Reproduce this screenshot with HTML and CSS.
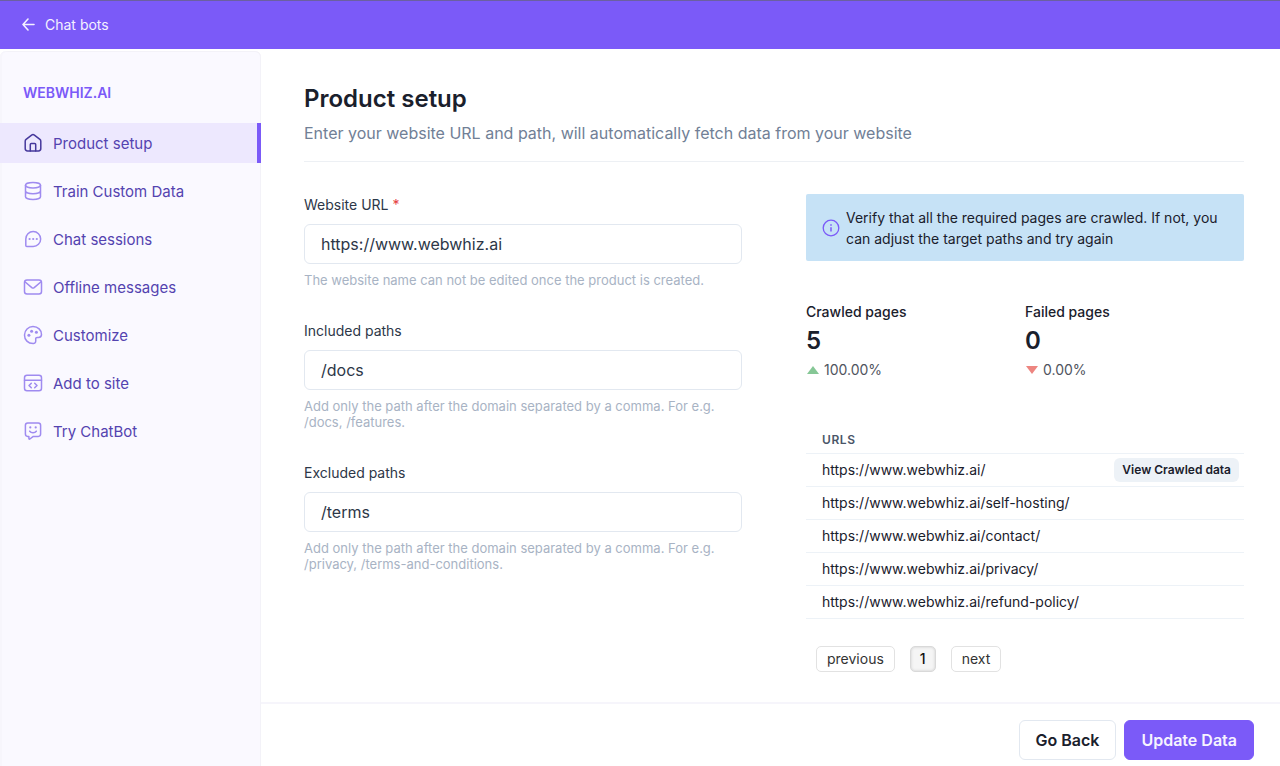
FILE: index.html
```html
<!DOCTYPE html>
<html lang="en">
<head>
    <meta charset="UTF-8">
    <meta name="viewport" content="width=device-width, initial-scale=1.0">
    <title>Product setup - WebWhiz</title>
    <link rel="stylesheet" href="styles.css">
</head>
<body>
    <header class="topbar">
        <a href="#" class="back-link">
            <svg width="14" height="14" viewBox="0 0 14 14" fill="none" stroke="currentColor" stroke-width="1.6" stroke-linecap="round" stroke-linejoin="round">
                <path d="M13 7.500H2M7 2L2 7.500l5 5.500"/>
            </svg>
            Chat bots
        </a>
    </header>

    <div class="layout">
        <aside class="sidebar">
            <h2 class="sidebar-title">WEBWHIZ.AI</h2>
            <nav class="nav">
                <a href="#" class="nav-item active">
                    <svg class="icon" viewBox="0 0 20 20">
                        <path d="M2.200 8.300c0-.8.3-1.400.9-1.900l5.500-4.300c.9-.7 1.900-.7 2.800 0l5.500 4.300c.6.500.9 1.100.9 1.900v7.200c0 1.400-1 2.400-2.400 2.400H4.600c-1.400 0-2.400-1-2.400-2.400z"/>
                        <path d="M7.300 17.900v-6.400c0-.6.4-1 1-1h3.400c.6 0 1 .4 1 1v6.400"/>
                    </svg>
                    Product setup
                </a>
                <a href="#" class="nav-item">
                    <svg class="icon" viewBox="0 0 20 20">
                        <ellipse cx="10" cy="4.200" rx="7.500" ry="2.700"/>
                        <path d="M2.500 4.200v11.600c0 1.500 3.400 2.700 7.500 2.700s7.500-1.200 7.500-2.700V4.200M2.500 10c0 1.500 3.400 2.700 7.500 2.700s7.500-1.200 7.500-2.700"/>
                    </svg>
                    Train Custom Data
                </a>
                <a href="#" class="nav-item">
                    <svg class="icon" viewBox="0 0 20 20">
                        <path d="M10.200 2.500a7.400 7.400 0 1 1 0 14.900H3.800c-.7 0-1-.3-1-1V10a7.400 7.400 0 0 1 7.400-7.500z"/>
                        <g class="dots"><circle cx="6.600" cy="10" r="1.100"/><circle cx="10.200" cy="10" r="1.100"/><circle cx="13.800" cy="10" r="1.100"/></g>
                    </svg>
                    Chat sessions
                </a>
                <a href="#" class="nav-item">
                    <svg class="icon" viewBox="0 0 20 20">
                        <rect x="1.500" y="3" width="17" height="14" rx="2.500"/>
                        <path d="M2.200 5l6.600 5.600c.8.6 1.600.6 2.400 0L17.800 5"/>
                    </svg>
                    Offline messages
                </a>
                <a href="#" class="nav-item">
                    <svg class="icon" viewBox="0 0 20 20">
                        <path d="M10.500 18.500C5 18.700 1.400 14.800 1.500 10c.1-4.900 3.800-8.400 8.500-8.400 4.900 0 8.600 3.500 8.500 7.900 0 2-1.300 2.900-3 2.900h-1.200c-1.300 0-1.800.8-1.600 2 .3 2.100-.1 4-2.200 4.100z"/>
                        <g class="dots"><circle cx="5.900" cy="10.200" r="1.500"/><circle cx="8.600" cy="6.200" r="1.500"/><circle cx="13.400" cy="7.300" r="1.500"/></g>
                    </svg>
                    Customize
                </a>
                <a href="#" class="nav-item">
                    <svg class="icon" viewBox="0 0 20 20">
                        <rect x="1.500" y="2.200" width="17" height="15.600" rx="2.500"/>
                        <path d="M1.500 7.200h17M8.300 10.200l-2.300 2.300 2.300 2.300M11.700 10.200l2.300 2.300-2.300 2.300"/>
                    </svg>
                    Add to site
                </a>
                <a href="#" class="nav-item">
                    <svg class="icon" viewBox="0 0 20 20">
                        <path d="M4.700 1.900h10.600c1.400 0 2.300.9 2.300 2.300v8.900c0 1.400-.9 2.300-2.300 2.300h-5L6.900 18c-.6.4-1 .1-1-.5v-2.100H4.700c-1.400 0-2.300-.9-2.300-2.300V4.200c0-1.400.9-2.300 2.300-2.300z"/>
                        <path d="M6.700 10.200c1.500 2 5.100 2 6.600 0"/>
                        <g class="dots"><circle cx="7.300" cy="6.400" r="1.100"/><circle cx="12.700" cy="6.400" r="1.100"/></g>
                    </svg>
                    Try ChatBot
                </a>
            </nav>
        </aside>

        <main class="main">
            <div class="content">
                <div class="page-header">
                    <h1>Product setup</h1>
                    <p>Enter your website URL and path, will automatically fetch data from your website</p>
                </div>

                <div class="columns">
                    <form id="setupForm" class="setup-form">
                        <div class="form-group">
                            <label for="websiteUrl">Website URL <span class="required">*</span></label>
                            <input type="text" id="websiteUrl" value="https://www.webwhiz.ai" required>
                            <p class="help">The website name can not be edited once the product is created.</p>
                        </div>
                        <div class="form-group">
                            <label for="includedPaths">Included paths</label>
                            <input type="text" id="includedPaths" value="/docs">
                            <p class="help">Add only the path after the domain separated by a comma. For e.g. /docs, /features.</p>
                        </div>
                        <div class="form-group">
                            <label for="excludedPaths">Excluded paths</label>
                            <input type="text" id="excludedPaths" value="/terms">
                            <p class="help">Add only the path after the domain separated by a comma. For e.g. /privacy, /terms-and-conditions.</p>
                        </div>
                    </form>

                    <section class="crawl">
                        <div class="alert">
                            <svg class="alert-icon" viewBox="0 0 18 18" fill="none" stroke="currentColor" stroke-width="1.3">
                                <circle cx="9" cy="9" r="7.800"/>
                                <path d="M9 8.200v4.300M9 5.300v1.500" stroke-width="1.500"/>
                            </svg>
                            <p>Verify that all the required pages are crawled. If not, you can adjust the target paths and try again</p>
                        </div>

                        <dl class="stats">
                            <div class="stat">
                                <dt>Crawled pages</dt>
                                <dd class="stat-number">5</dd>
                                <dd class="stat-help"><span class="arrow arrow-up"></span>100.00%</dd>
                            </div>
                            <div class="stat">
                                <dt>Failed pages</dt>
                                <dd class="stat-number">0</dd>
                                <dd class="stat-help"><span class="arrow arrow-down"></span>0.00%</dd>
                            </div>
                        </dl>

                        <table class="urls">
                            <thead>
                                <tr><th colspan="2">URLS</th></tr>
                            </thead>
                            <tbody>
                                <tr>
                                    <td>https://www.webwhiz.ai/</td>
                                    <td class="action"><button type="button" class="view-btn">View Crawled data</button></td>
                                </tr>
                                <tr><td colspan="2">https://www.webwhiz.ai/self-hosting/</td></tr>
                                <tr><td colspan="2">https://www.webwhiz.ai/contact/</td></tr>
                                <tr><td colspan="2">https://www.webwhiz.ai/privacy/</td></tr>
                                <tr><td colspan="2">https://www.webwhiz.ai/refund-policy/</td></tr>
                            </tbody>
                        </table>

                        <div class="pagination">
                            <button type="button">previous</button>
                            <button type="button" class="current">1</button>
                            <button type="button">next</button>
                        </div>
                    </section>
                </div>
            </div>

            <footer class="actions">
                <button type="button" class="btn btn-outline">Go Back</button>
                <button type="submit" form="setupForm" class="btn btn-primary">Update Data</button>
            </footer>
        </main>
    </div>
</body>
</html>
```

FILE: styles.css
```css
* {
    margin: 0;
    padding: 0;
    box-sizing: border-box;
}

body {
    font-family: Inter, 'Liberation Sans', sans-serif;
    color: #1a202c;
    background: #fff;
    min-height: 100vh;
    display: flex;
    flex-direction: column;
}

button, input {
    font-family: inherit;
    color: inherit;
}

.topbar {
    height: 49px;
    padding: 0 21px 2px;
    display: flex;
    align-items: center;
    background: #7b5af8;
    border-top: 1px solid #6b60a0;
}

.back-link {
    display: flex;
    align-items: center;
    gap: 10px;
    color: #f4f1ff;
    font-size: 14px;
    text-decoration: none;
}

.layout {
    flex: 1;
    display: flex;
}

/* Sidebar */
.sidebar {
    width: 261px;
    flex-shrink: 0;
    margin-top: 2px;
    padding-top: 30px;
    background: #faf9ff;
    border-radius: 6px 6px 0 0;
    box-shadow: inset 2px 0 #f7f6fc, inset -1px 0 #f3f2f8, inset 0 1px #f3f2f8;
}

.sidebar-title {
    padding-left: 23px;
    margin-bottom: 18px;
    font-size: 14px;
    line-height: 24px;
    font-weight: 600;
    color: #7b5af8;
}

.nav {
    display: flex;
    flex-direction: column;
    gap: 8px;
}

.nav-item {
    height: 40px;
    padding-left: 23px;
    display: flex;
    align-items: center;
    gap: 10px;
    border-right: 4px solid transparent;
    color: #5443b0;
    font-size: 15px;
    text-decoration: none;
}

.nav-item.active {
    background: #ede8fe;
    border-right-color: #7b5af8;
}

.icon {
    width: 20px;
    height: 20px;
    fill: none;
    stroke: #9f8bf0;
    stroke-width: 1.5;
    stroke-linecap: round;
    stroke-linejoin: round;
}

.active .icon {
    stroke: #46389c;
}

.dots {
    fill: #9f8bf0;
    stroke: none;
}

/* Main area */
.main {
    flex: 1;
    min-width: 0;
    display: flex;
    flex-direction: column;
}

.content {
    flex: 1;
    padding: 33px 36px 28px 43px;
}

.page-header {
    padding-bottom: 16px;
    border-bottom: 1px solid #edf0f4;
}

.page-header h1 {
    font-size: 24px;
    line-height: 34px;
    font-weight: 600;
}

.page-header p {
    margin-top: 5px;
    font-size: 16px;
    line-height: 24px;
    color: #718096;
}

.columns {
    padding-top: 32px;
    display: grid;
    grid-template-columns: 1fr 1fr;
    gap: 64px;
}

.form-group {
    margin-bottom: 32px;
}

.form-group label {
    display: block;
    margin-bottom: 8px;
    font-size: 14px;
    line-height: 22px;
    color: #2d3748;
}

.required {
    color: #e53e3e;
}

.form-group input {
    display: block;
    width: 100%;
    height: 40px;
    padding: 0 16px;
    border: 1px solid #e2e8f0;
    border-radius: 6px;
    font-size: 16px;
    color: #2d3748;
    background: #fff;
}

.help {
    margin-top: 8px;
    font-size: 13px;
    line-height: 16px;
    color: #a8b3c4;
}

.alert {
    display: flex;
    align-items: center;
    gap: 6px;
    padding: 13px 16px 12px;
    background: #c6e2f6;
    border-radius: 2px;
    font-size: 14px;
    line-height: 21px;
}

.alert-icon {
    width: 18px;
    height: 18px;
    flex-shrink: 0;
    color: #7b5af8;
}

.stats {
    margin-top: 40px;
    display: grid;
    grid-template-columns: 1fr 1fr;
}

.stat dt {
    font-size: 14px;
    line-height: 21px;
    font-weight: 500;
}

.stat-number {
    font-size: 24px;
    line-height: 37px;
    font-weight: 600;
}

.stat-help {
    display: flex;
    align-items: center;
    gap: 5px;
    padding-left: 1px;
    font-size: 14px;
    line-height: 21px;
    color: #50545e;
}

.arrow {
    border: 6px solid transparent;
}

.arrow-up {
    border-top: none;
    border-bottom: 8px solid #86c796;
}

.arrow-down {
    border-bottom: none;
    border-top: 8px solid #ed8580;
}

/* Crawled urls */
.urls {
    width: 100%;
    margin-top: 47px;
    border-collapse: collapse;
}

.urls th, .urls td {
    height: 33px;
    padding-left: 16px;
    border-bottom: 1px solid #edf2f7;
    text-align: left;
    font-size: 14px;
    line-height: 20px;
}

.urls th {
    height: 26px;
    font-size: 12px;
    font-weight: 600;
    letter-spacing: 0.05em;
    color: #4a5568;
}

.urls .action {
    padding: 0 5px 0 0;
    text-align: right;
}

.view-btn {
    height: 24px;
    padding: 0 8px;
    border: none;
    border-radius: 6px;
    background: #edf2f7;
    font-size: 12px;
    font-weight: 600;
    vertical-align: middle;
    cursor: pointer;
}

.pagination {
    margin-top: 27px;
    padding-left: 10px;
    display: flex;
    gap: 15px;
}

.pagination button {
    height: 26px;
    padding: 0 10px;
    border: 1px solid #e2e2e2;
    border-radius: 5px;
    background: #fff;
    font-size: 14px;
    color: #333;
    cursor: pointer;
}

.pagination .current {
    padding: 0 9px;
    background: #f5f5f5;
    border-color: #d9d9d9;
    box-shadow: inset 0 0 3px #ccc;
    font-weight: 500;
    color: #111;
}

.actions {
    padding: 16px 26px 6px;
    display: flex;
    justify-content: flex-end;
    gap: 8px;
    border-top: 2px solid #f6f5fb;
}

.btn {
    height: 40px;
    padding: 0 16px;
    border: 1px solid #e2e8f0;
    border-radius: 6px;
    font-size: 16px;
    font-weight: 600;
    cursor: pointer;
}

.btn-outline {
    background: #fff;
}

.btn-primary {
    background: #7b5af8;
    border-color: #7b5af8;
    color: #f6f3ff;
}
```
